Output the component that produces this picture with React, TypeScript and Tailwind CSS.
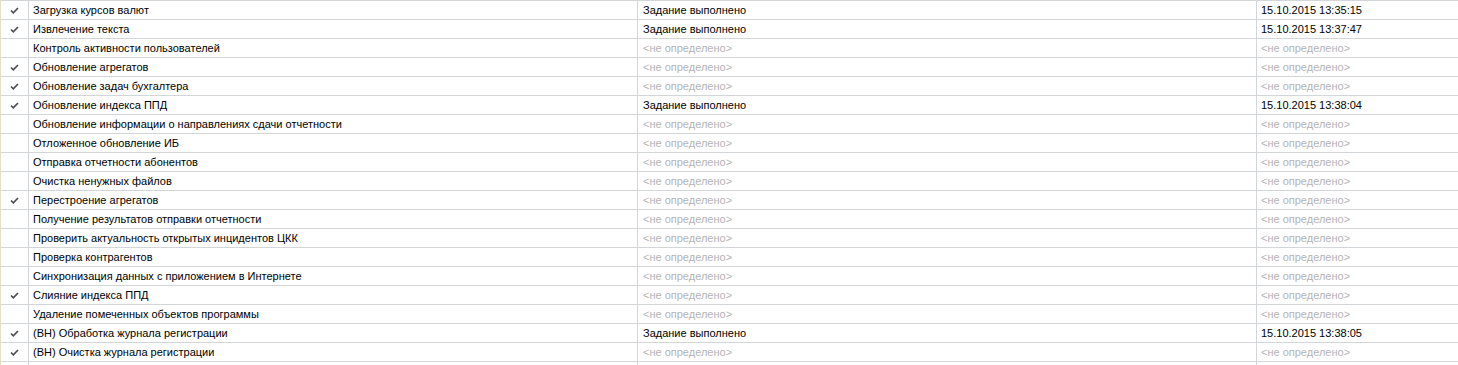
import React from "react";

type Row = { c: boolean; name: string; state?: string; date?: string };

const rows: Row[] = [
  { c: true, name: "Загрузка курсов валют", state: "Задание выполнено", date: "15.10.2015 13:35:15" },
  { c: true, name: "Извлечение текста", state: "Задание выполнено", date: "15.10.2015 13:37:47" },
  { c: false, name: "Контроль активности пользователей" },
  { c: true, name: "Обновление агрегатов" },
  { c: true, name: "Обновление задач бухгалтера" },
  { c: true, name: "Обновление индекса ППД", state: "Задание выполнено", date: "15.10.2015 13:38:04" },
  { c: false, name: "Обновление информации о направлениях сдачи отчетности" },
  { c: false, name: "Отложенное обновление ИБ" },
  { c: false, name: "Отправка отчетности абонентов" },
  { c: false, name: "Очистка ненужных файлов" },
  { c: true, name: "Перестроение агрегатов" },
  { c: false, name: "Получение результатов отправки отчетности" },
  { c: false, name: "Проверить актуальность открытых инцидентов ЦКК" },
  { c: false, name: "Проверка контрагентов" },
  { c: false, name: "Синхронизация данных с приложением в Интернете" },
  { c: true, name: "Слияние индекса ППД" },
  { c: false, name: "Удаление помеченных объектов программы" },
  { c: true, name: "(ВН) Обработка журнала регистрации", state: "Задание выполнено", date: "15.10.2015 13:38:05" },
  { c: true, name: "(ВН) Очистка журнала регистрации" },
];

const Check = () => (
  <svg width="9" height="7" viewBox="0 0 9 7" className="block">
    <path d="M1 3.5 L3.3 5.8 L8 1" fill="none" stroke="#4a4a4a" strokeWidth="1.6" />
  </svg>
);

const Undef = () => <span className="text-[#b4b4b4]">&lt;не определено&gt;</span>;

export default function App() {
  return (
    <div
      className="w-[1458px] h-[365px] bg-white overflow-hidden border-l border-[#e4dfc9] text-[11px] text-black"
      style={{ fontFamily: '"Liberation Sans", Arial, sans-serif' }}
    >
      {rows.map((r, i) => (
        <div key={i} className="grid grid-cols-[27px_609px_619px_1fr] h-[19px] border-t border-[#d3d6d9]">
          <div className="flex items-center pl-[9px] pt-[1px]">{r.c ? <Check /> : null}</div>
          <div className="flex items-center pl-[4px] pt-[1px] border-l border-[#d3d6d9] whitespace-nowrap">{r.name}</div>
          <div className="flex items-center pl-[5px] pt-[1px] border-l border-[#d3d6d9] whitespace-nowrap">
            {r.state ? r.state : <Undef />}
          </div>
          <div className="flex items-center pl-[4px] pt-[1px] border-l border-[#d3d6d9] whitespace-nowrap">
            {r.date ? r.date : <Undef />}
          </div>
        </div>
      ))}
      <div className="grid grid-cols-[27px_609px_619px_1fr] h-[4px] border-t border-[#d3d6d9]">
        <div />
        <div className="border-l border-[#d3d6d9]" />
        <div className="border-l border-[#d3d6d9]" />
        <div className="border-l border-[#d3d6d9]" />
      </div>
    </div>
  );
}
